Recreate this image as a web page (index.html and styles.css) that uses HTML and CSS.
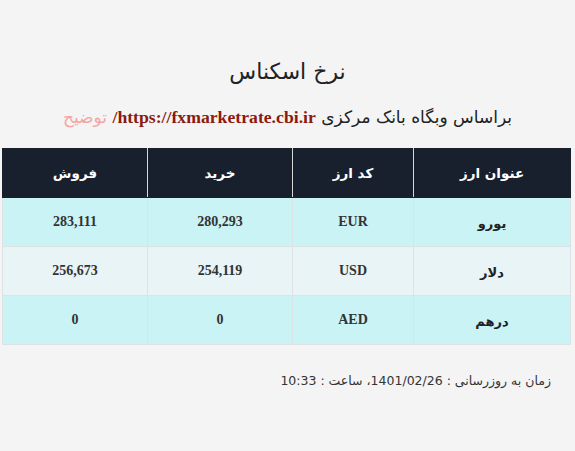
FILE: index.html
```html
<!DOCTYPE html>
<html lang="fa" dir="rtl">
<head>
<meta charset="utf-8">
<title>نرخ اسکناس</title>
<link rel="stylesheet" href="styles.css">
</head>
<body>
<div class="page">
  <h1 class="title">نرخ اسكناس</h1>
  <p class="source">براساس وبگاه بانک مرکزی <a class="src-link" href="#">https://fxmarketrate.cbi.ir/</a> <span class="note">توضیح</span></p>
  <table class="rates">
    <colgroup>
      <col class="c-name"><col class="c-code"><col class="c-buy"><col class="c-sell">
    </colgroup>
    <thead>
      <tr><th>عنوان ارز</th><th>کد ارز</th><th>خرید</th><th>فروش</th></tr>
    </thead>
    <tbody>
      <tr class="odd"><td class="fa">یورو</td><td class="num">EUR</td><td class="num">280,293</td><td class="num">283,111</td></tr>
      <tr class="even"><td class="fa">دلار</td><td class="num">USD</td><td class="num">254,119</td><td class="num">256,673</td></tr>
      <tr class="odd"><td class="fa">درهم</td><td class="num">AED</td><td class="num">0</td><td class="num">0</td></tr>
    </tbody>
  </table>
  <p class="updated">زمان به روزرسانی : 1401/02/26، ساعت : 10:33</p>
</div>
</body>
</html>
```
FILE: styles.css
```css
html, body {
  margin: 0;
  padding: 0;
  background: #f4f4f4;
}
body {
  font-family: "DejaVu Sans", "Noto Sans", sans-serif;
  color: #333;
}
.page {
  width: 575px;
  display: flex;
  flex-direction: column;
  align-items: center;
}
.title {
  margin: 57px 0 0;
  font-size: 22px;
  line-height: 30px;
  font-weight: normal;
  color: #222;
}
.source {
  margin: 17px 0 0;
  font-size: 17px;
  line-height: 26px;
  color: #222;
}
.src-link {
  font-family: "Liberation Serif", serif;
  font-weight: bold;
  font-size: 17.7px;
  color: #8b1a10;
  text-decoration: none;
}
.note {
  color: #f4a4a4;
}
.rates {
  margin: 18px 4px 0 3px;
  width: 568px;
  table-layout: fixed;
  border-collapse: collapse;
  align-self: flex-start;
}
.c-name { width: 157px; }
.c-code { width: 121px; }
.c-buy { width: 145px; }
.c-sell { width: 145px; }
.rates th {
  background: #18202e;
  color: #fff;
  font-size: 13.5px;
  font-weight: bold;
  height: 48px;
  padding: 0;
  border: 1px solid #d8d8d8;
  border-top-color: #18202e;
  border-bottom-color: #18202e;
}
.rates th:first-child { border-right-color: #18202e; }
.rates th:last-child { border-left-color: #18202e; }
.rates td {
  height: 48px;
  padding: 0;
  text-align: center;
  vertical-align: middle;
  border: 1px solid #dde3e5;
}
.rates .odd td { background: #c9f3f5; }
.rates .even td { background: #e8f4f6; }
.rates td.fa {
  font-size: 13px;
  font-weight: bold;
  color: #222;
  line-height: 20px;
  padding-top: 3px;
  height: 45px;
}
.rates td.num {
  font-family: "Liberation Serif", serif;
  font-weight: bold;
  font-size: 14px;
  color: #333;
  line-height: 18px;
}
.updated {
  align-self: stretch;
  margin: 26px 0 0;
  padding-right: 24px;
  font-size: 12.5px;
  line-height: 20px;
  color: #333;
}
```
